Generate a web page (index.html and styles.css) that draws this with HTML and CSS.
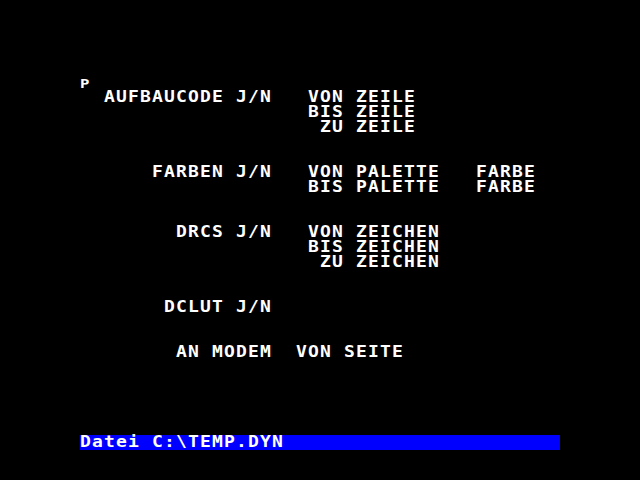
FILE: index.html
```html
<!DOCTYPE html>
<html>
<head>
<meta charset="utf-8">
<link rel="stylesheet" href="styles.css">
</head>
<body>
<div class="screen">
<div class="row small">P</div>
<div class="row">  AUFBAUCODE J/N   VON ZEILE</div>
<div class="row">                   BIS ZEILE</div>
<div class="row">                    ZU ZEILE</div>
<div class="row"></div>
<div class="row"></div>
<div class="row">      FARBEN J/N   VON PALETTE   FARBE</div>
<div class="row">                   BIS PALETTE   FARBE</div>
<div class="row"></div>
<div class="row"></div>
<div class="row">        DRCS J/N   VON ZEICHEN</div>
<div class="row">                   BIS ZEICHEN</div>
<div class="row">                    ZU ZEICHEN</div>
<div class="row"></div>
<div class="row"></div>
<div class="row">       DCLUT J/N</div>
<div class="row"></div>
<div class="row"></div>
<div class="row">        AN MODEM  VON SEITE</div>
<div class="row"></div>
<div class="row"></div>
<div class="row"></div>
<div class="row"></div>
<div class="row"></div>
<div class="row bar">Datei C:\TEMP.DYN</div>
</div>
</body>
</html>
```
FILE: styles.css
```css
html, body {
  margin: 0;
  padding: 0;
  background: #000;
  width: 640px;
  height: 480px;
  overflow: hidden;
}
.screen {
  margin-left: 80px;
  padding-top: 75px;
  width: 400px;
  transform: scaleX(1.2);
  transform-origin: 0 0;
  font-family: "DejaVu Sans Mono", monospace;
  font-weight: bold;
  font-size: 15px;
  letter-spacing: 0.97px;
  color: #fff;
}
.row {
  height: 15px;
  line-height: 15px;
  white-space: pre;
  box-sizing: border-box;
}
.row.small {
  font-size: 13px;
  line-height: 12px;
  padding-top: 3px;
  letter-spacing: 0;
}
.row.bar {
  background: #0000ff;
}
```
